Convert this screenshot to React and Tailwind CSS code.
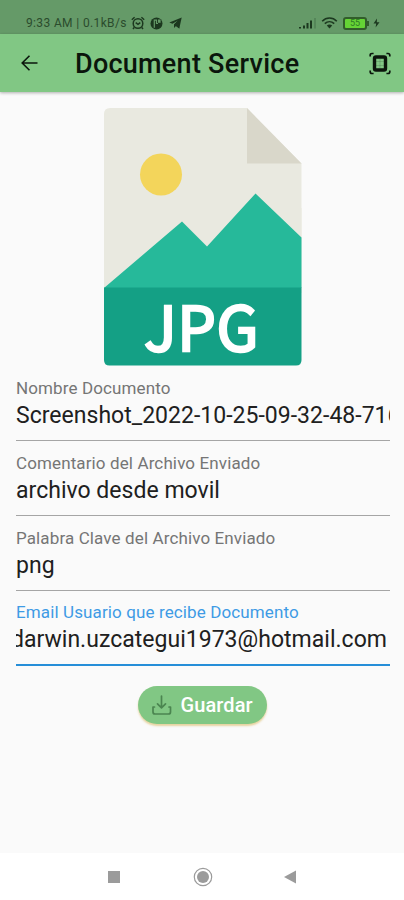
import clsx from 'clsx';

const FIELDS = [
  { label: 'Nombre Documento', value: 'Screenshot_2022-10-25-09-32-48-716', h: 'h-[75px]' },
  { label: 'Comentario del Archivo Enviado', value: 'archivo desde movil', h: 'h-[75px]' },
  { label: 'Palabra Clave del Archivo Enviado', value: 'png', h: 'h-[74px]' },
  { label: 'Email Usuario que recibe Documento', value: 'darwin.uzcategui1973@hotmail.com', h: 'h-[75px]', focused: true },
];

function StatusBar() {
  return (
    <div className="h-[34px] shrink-0 bg-[#659a68] pt-[13px] pl-[26px] pr-[24px] flex items-start justify-between text-[#1c381f]">
      <div className="flex items-center h-5">
        <span className="text-[12px] leading-5 tracking-[0.36px] whitespace-nowrap w-[105px] text-[#2b4c2d]">9:33 AM | 0.1kB/s</span>
        <svg width="14" height="14" viewBox="0 0 14 14" fill="none" stroke="currentColor" strokeWidth="1.5">
          <circle cx="7" cy="7.5" r="4.8" />
          <path d="M4.7 6.7 7 8.3l2.3-1.6M.8 3.7 3.6 1.2M13.2 3.7 10.4 1.2M3.2 11.5 2 13M10.8 11.5 12 13" />
        </svg>
        <svg className="ml-[5px]" width="13" height="13" viewBox="0 0 13 13">
          <circle cx="6.5" cy="6.5" r="6" fill="currentColor" />
          <path d="M4.3 10.8V3.2h2.2v3.3H8" stroke="#659a68" strokeWidth="1.2" fill="none" />
          <path d="M8 2.5h2.6v3.3H8z" fill="#659a68" />
        </svg>
        <svg className="ml-[6px]" width="13" height="12" viewBox="0 0 13 12">
          <path d="M12.7.5.3 5.6l3.2 1.2L9 3.6 5 7.4v3.5l2-2 3.3 2.5z" fill="currentColor" />
          <path d="M5 7.4 9 3.6l1.3 7.8z" fill="currentColor" />
        </svg>
      </div>
      <div className="flex items-center h-5">
        <svg width="19" height="12" viewBox="0 0 19 12" fill="currentColor">
          <path d="M1 10h2v1.5H1zM5 8.5h2v3H5zM8.5 6h2v5.5h-2zM12 3.5h2v8h-2z" />
          <path d="M16.5 1h1v10.5h-1z" opacity=".4" />
        </svg>
        <svg className="ml-[4px]" width="17" height="12" viewBox="0 0 17 12" fill="none" stroke="currentColor" strokeWidth="1.6">
          <path d="M1.2 4.2C5.4-.1 11.6-.1 15.8 4.2M3.8 6.7c2.8-2.7 6.6-2.7 9.4 0" />
          <path d="M5.8 8.4c1.6-1.3 3.8-1.3 5.4 0L8.5 11.4z" fill="currentColor" stroke="none" />
        </svg>
        <div className="ml-[5px] w-[24px] h-[13px] rounded-[3px] border-2 border-[#315d2a] bg-[#65d335] text-[9px] leading-[9px] text-center text-[#2d7825]">55</div>
        <div className="w-[2px] h-[5px] bg-[#315d2a]" />
        <svg className="ml-[4px]" width="7" height="10" viewBox="0 0 7 10">
          <path d="M4 .5.5 5.6h2.7L2.6 9.5 6.5 4.2H3.8z" fill="currentColor" />
        </svg>
      </div>
    </div>
  );
}

function AppBar() {
  return (
    <header className="relative h-[58px] shrink-0 bg-[#81c784] shadow-[0_1px_3px_rgba(0,0,0,0.3)] flex items-center pl-[21px] pr-[13px] text-[#0b160c]">
      <svg width="17" height="16" viewBox="0 0 17 16" fill="none" stroke="currentColor" strokeWidth="1.6">
        <path d="M16.5 8H1.4M8.5.7 1.2 8l7.3 7.3" />
      </svg>
      <h1 className="mt-[2px] ml-[37px] text-[27px] leading-[32px] font-medium tracking-[0.26px] whitespace-nowrap">Document Service</h1>
      <svg className="ml-auto" width="22" height="23" viewBox="0 0 22 23" fill="none" stroke="currentColor">
        <path d="M1.2 4.6V3.2Q1.2 1.5 3 1.5h1.6M17.4 1.5H19q1.8 0 1.8 1.7v1.4M20.8 18.4v1.4q0 1.7-1.8 1.7h-1.6M4.6 21.5H3q-1.8 0-1.8-1.7v-1.4" strokeWidth="1.7" />
        <rect x="5.5" y="5" width="11" height="13" rx="1.5" strokeWidth="3.4" />
        <path d="M7 9.5h8M7 13.5h8M11 7v9" strokeWidth=".6" opacity=".25" />
      </svg>
    </header>
  );
}

function JpgFile() {
  return (
    <svg className="ml-[104px] block" width="198" height="258" viewBox="0 0 198 258">
      <path d="M6 0H143l54.5 55.5V130H0V6Q0 0 6 0z" fill="#e9e9e0" />
      <path d="M0 100h197.5v85H0z" fill="#e9e9e0" />
      <path d="M143 0v55.5h54.5z" fill="#d9d7ca" />
      <circle cx="57" cy="66.5" r="21" fill="#f3d55b" />
      <path d="M0 180 78 113.5 103 138.5 151.5 85.5 197.5 129.5V180z" fill="#26b99a" />
      <path d="M0 179.5h197.5V252q0 5.5-5.5 5.5H5.5Q0 257.5 0 252z" fill="#14a085" />
      <text x="40" y="243" fontSize="61" letterSpacing="0.6" fill="#fff" stroke="#fff" strokeWidth="2.4" fontFamily="'Noto Sans CJK SC', 'Noto Sans', sans-serif">JPG</text>
    </svg>
  );
}

function Field({ f }) {
  return (
    <div className={clsx('flex flex-col', f.h)}>
      <label className={clsx('text-[17px] leading-5 tracking-[0.12px] whitespace-nowrap', f.focused ? 'text-[#3e9be5]' : 'text-[#757575]')}>
        {f.label}
      </label>
      <div className={clsx('mt-[4px] h-[28px] overflow-hidden flex text-[23px] leading-[28px] tracking-[0.02px] text-[#202020] whitespace-nowrap', f.focused && 'justify-end pr-[3px]')}>
        <span>{f.value}</span>
      </div>
      <div className={clsx('mt-[10px] shrink-0', f.focused ? 'h-[2px] bg-[#268ed8]' : 'h-px bg-[#a5a5a5]')} />
    </div>
  );
}

export default function App() {
  return (
    <div className="w-[404px] h-[900px] flex flex-col bg-[#fafafa] overflow-hidden font-['Roboto',sans-serif]">
      <StatusBar />
      <AppBar />
      <main className="flex-1 pt-[16px]">
        <JpgFile />
        <form className="mt-[12px] ml-4 mr-[14px]">
          {FIELDS.map((f) => (
            <Field key={f.label} f={f} />
          ))}
        </form>
        <button type="button" className="mx-auto mt-[9px] w-[129px] h-[38px] rounded-full bg-[#81c784] shadow-[0_2px_2px_rgba(220,190,110,0.65)] flex items-center pl-[14px] text-white">
          <svg width="20" height="20" viewBox="0 0 20 20" fill="none" stroke="#4b8550" strokeWidth="1.7" strokeLinecap="round" strokeLinejoin="round">
            <path d="M9.5 1v11.5M5.5 8.8l4 4 4-4M2.5 12H1v5q0 2 2 2h13.5q2 0 2-2v-5H17" />
          </svg>
          <span className="ml-[9px] text-[20px] leading-6 font-medium tracking-[0.1px]">Guardar</span>
        </button>
      </main>
      <nav className="h-[47px] shrink-0 bg-white flex items-center pl-[108px] text-[#9b9b9b]">
        <div className="w-[12px] h-[12px] bg-[#9b9b9b]" />
        <svg className="ml-[73px]" width="20" height="20" viewBox="0 0 20 20">
          <circle cx="10" cy="10" r="8.7" fill="none" stroke="currentColor" strokeWidth="1.2" />
          <circle cx="10" cy="10" r="6" fill="currentColor" />
        </svg>
        <svg className="ml-[71px]" width="12" height="14" viewBox="0 0 12 14">
          <path d="M12 .5v13L0 7z" fill="currentColor" />
        </svg>
      </nav>
    </div>
  );
}
